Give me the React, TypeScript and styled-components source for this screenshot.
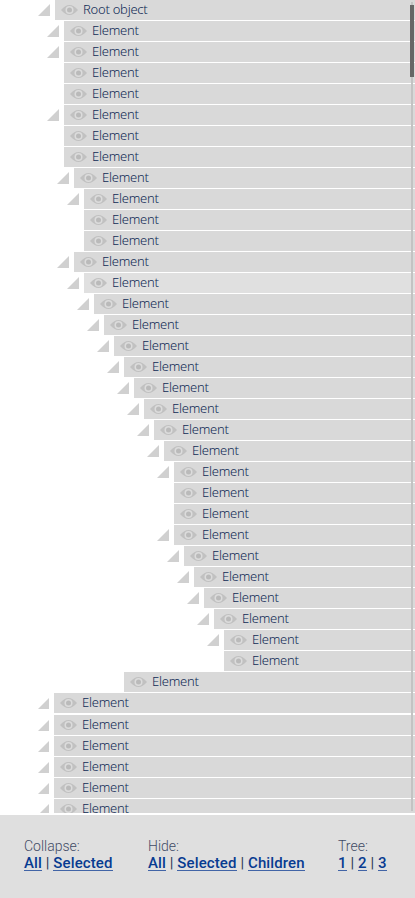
import React from "react";
import styled, { createGlobalStyle } from "styled-components";

const GlobalStyle = createGlobalStyle`
  * { box-sizing: border-box; }
  body { margin: 0; background: #fff; overflow: hidden; }
`;

const Panel = styled.main`
  position: relative;
  display: flex;
  flex-direction: column;
  width: 415px;
  height: 898px;
  background: #fff;
`;

const Tree = styled.ul`
  list-style: none;
  margin: 0 0 2px;
  padding: 0;
  height: 813px;
  flex: none;
  overflow: hidden;
`;

const Row = styled.li<{ $indent: number; $gap?: boolean }>`
  display: flex;
  height: 20px;
  margin-bottom: ${(p) => (p.$gap ? 2 : 1)}px;
  padding-left: ${(p) => p.$indent - 17}px;
`;

const ArrowSlot = styled.span`
  display: flex;
  flex: none;
  width: 17px;
  padding-top: 4px;
`;

const Arrow = styled.svg`
  display: block;
  fill: #d0d0d0;
`;

const Bar = styled.div<{ $light?: boolean }>`
  display: flex;
  flex: 1;
  padding-left: 6px;
  background: ${(p) => (p.$light ? "#e0e0e0" : "#d9d9d9")};
`;

const EyeIcon = styled.svg`
  flex: none;
  width: 17px;
  height: 10px;
  margin: 5px 5px 0 0;
`;

const Label = styled.span`
  font: 300 13px/18px "Noto Sans", sans-serif;
  letter-spacing: -0.25px;
  color: #102a55;
  white-space: nowrap;
`;

const ScrollTrack = styled.div`
  position: absolute;
  top: 2px;
  left: 411px;
  width: 2px;
  height: 809px;
  background: #c3c3c3;
`;

const ScrollThumb = styled.div`
  position: absolute;
  top: 3px;
  left: -1px;
  width: 4px;
  height: 72px;
  background: #666;
`;

const Footer = styled.footer`
  display: flex;
  flex: 1;
  padding: 23px 0 0 24px;
  background: #dfdfdf;
  font-family: Roboto, sans-serif;
  color: #4f5a70;
`;

const Group = styled.section<{ $width: number }>`
  flex: none;
  width: ${(p) => p.$width}px;
  white-space: nowrap;
`;

const Heading = styled.div`
  font-size: 14px;
  line-height: 17px;
  font-weight: 300;
  color: #3f4b66;
`;

const Links = styled.div`
  display: flex;
  gap: 3.8px;
  font-size: 15px;
  line-height: 17px;
  letter-spacing: 0.12px;
`;

const Action = styled.a`
  height: 16px;
  border-bottom: 1px solid #4164a6;
  color: #073b91;
  font-weight: 500;
  text-decoration: none;
`;

const Separator = styled.span`
  color: #2c3a56;
`;

type Item = { x: number; open?: boolean; text?: string; light?: boolean };
const leaf = (x: number): Item => ({ x });
const node = (x: number): Item => ({ x, open: true });

const items: Item[] = [
  { x: 55, open: true, text: "Root object" },
  node(64), node(64), leaf(64), leaf(64), node(64), leaf(64), leaf(64),
  node(74), node(84), leaf(84), leaf(84), node(74),
  { x: 84, open: true, light: true },
  node(94), node(104), node(114), node(124), node(134), node(144), node(154), node(164),
  node(174), leaf(174), leaf(174), node(174),
  node(184), node(194), node(204), node(214), node(224), leaf(224),
  leaf(124),
  node(54), node(54), node(54), node(54), node(54), node(54),
];

const groups = [
  { title: "Collapse:", links: ["All", "Selected"], width: 124 },
  { title: "Hide:", links: ["All", "Selected", "Children"], width: 190 },
  { title: "Tree:", links: ["1", "2", "3"], width: 60 },
];

function Eye() {
  return (
    <EyeIcon viewBox="0 0 17 10">
      <path d="M0 5C3.200 1.600 5.500 0 8.500 0S13.800 1.600 17 5C13.800 8.400 11.500 10 8.500 10S3.200 8.400 0 5Z" fill="#c1c1c1" />
      <circle cx="8.500" cy="5" r="4" fill="#dcdcdc" />
      <circle cx="8.500" cy="5" r="2.500" fill="#bababa" />
    </EyeIcon>
  );
}

export default function App() {
  return (
    <>
      <GlobalStyle />
      <Panel>
        <Tree>
          {items.map((item, i) => (
            <Row key={i} $indent={item.x} $gap={i === 33}>
              <ArrowSlot>
                {item.open && (
                  <Arrow width="12" height="12" viewBox="0 0 12 12">
                    <path d={item.x === 54 ? "M1 12L12 1V12Z" : "M0 12L12 0V12Z"} />
                  </Arrow>
                )}
              </ArrowSlot>
              <Bar $light={item.light}>
                <Eye />
                <Label>{item.text ?? "Element"}</Label>
              </Bar>
            </Row>
          ))}
        </Tree>
        <Footer>
          {groups.map((group) => (
            <Group key={group.title} $width={group.width}>
              <Heading>{group.title}</Heading>
              <Links>
                {group.links.map((link, i) => (
                  <React.Fragment key={link}>
                    {i > 0 && <Separator>|</Separator>}
                    <Action>{link}</Action>
                  </React.Fragment>
                ))}
              </Links>
            </Group>
          ))}
        </Footer>
        <ScrollTrack>
          <ScrollThumb />
        </ScrollTrack>
      </Panel>
    </>
  );
}
